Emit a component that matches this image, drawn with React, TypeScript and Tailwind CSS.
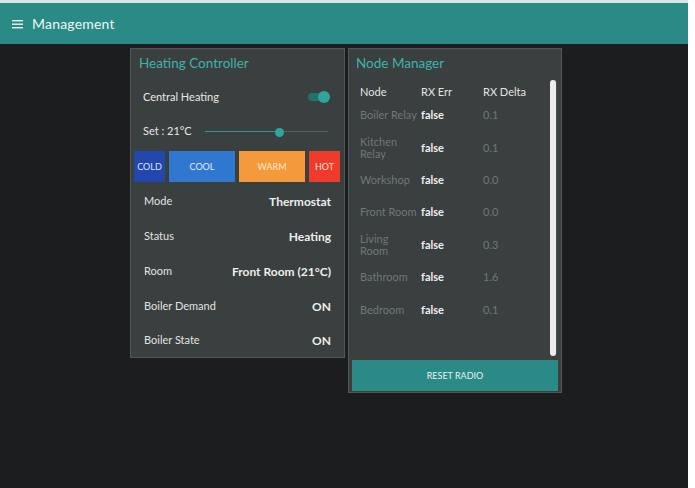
import React from "react";

const nodes = [
  { name: ["Boiler Relay"], err: "false", delta: "0.1" },
  { name: ["Kitchen", "Relay"], err: "false", delta: "0.1" },
  { name: ["Workshop"], err: "false", delta: "0.0" },
  { name: ["Front Room"], err: "false", delta: "0.0" },
  { name: ["Living", "Room"], err: "false", delta: "0.3" },
  { name: ["Bathroom"], err: "false", delta: "1.6" },
  { name: ["Bedroom"], err: "false", delta: "0.1" },
];

const info = [
  { label: "Mode", value: "Thermostat" },
  { label: "Status", value: "Heating" },
  { label: "Room", value: "Front Room (21°C)" },
  { label: "Boiler Demand", value: "ON" },
  { label: "Boiler State", value: "ON" },
];

export default function App() {
  return (
    <div
      className="flex w-[695px] h-[488px] bg-white overflow-hidden"
      style={{ fontFamily: "Lato, 'Open Sans', sans-serif" }}
    >
      <div className="flex flex-col w-[688px] h-full bg-[#1b1d1f]">
        <div className="h-[3px] bg-[#d9e6e5]" />
        <header className="flex items-center h-[41px] bg-[#2a8a86] pl-[12px] text-white">
          <svg width="12" height="10" viewBox="0 0 12 10" className="mr-[8px]">
            <rect x="0" y="1" width="11" height="1.4" fill="#eef7f6" />
            <rect x="0" y="4.5" width="11" height="1.4" fill="#eef7f6" />
            <rect x="0" y="8" width="11" height="1.4" fill="#eef7f6" />
          </svg>
          <span className="text-[14px] tracking-[0.2px] text-[#eef7f6]">Management</span>
        </header>

        <div className="flex items-start gap-[3px] pl-[130px] pt-[4px]">
          {/* heating controller */}
          <div className="w-[215px] bg-[#3a3f3f] border border-[#50565a] text-[#e6e8e8]">
            <div className="px-[8px] pt-[6px] h-[31px] text-[13.5px] leading-[16px] text-[#3fb3a8]">
              Heating Controller
            </div>
            <div className="flex items-center justify-between h-[34px] pl-[12px] pr-[14px] text-[11px]">
              <span>Central Heating</span>
              <div className="relative w-[22px] h-[12px] flex items-center">
                <div className="w-[20px] h-[8px] rounded-full bg-[#23706c]" />
                <div className="absolute right-0 top-0 w-[12px] h-[12px] rounded-full bg-[#2fa59d]" />
              </div>
            </div>
            <div className="flex items-center h-[35px] pl-[12px] pr-[16px] text-[11px]">
              <span className="w-[62px]">Set : 21°C</span>
              <div className="relative flex-1 h-[8px] flex items-center">
                <div className="w-[74px] h-[1.5px] bg-[#2a9a93]" />
                <div className="flex-1 h-[1.5px] bg-[#4f6665]" />
                <div className="absolute left-[70px] top-0 w-[9px] h-[9px] rounded-full bg-[#2fa59d]" />
              </div>
            </div>
            <div className="flex gap-[4px] px-[3px] mt-[2px] h-[31px] text-[9px]">
              <div className="w-[31px] flex items-center justify-center bg-[#2447ae] text-[#dfe6f5]">COLD</div>
              <div className="w-[66px] flex items-center justify-center bg-[#2f77cf] text-[#e4eef9]">COOL</div>
              <div className="w-[66px] flex items-center justify-center bg-[#f59a3a] text-[#fde8d2]">WARM</div>
              <div className="w-[31px] flex items-center justify-center bg-[#ef3b2b] text-[#fde0dc]">HOT</div>
            </div>
            <div className="pt-[2px]">
              {info.map((r, i) => (
                <div
                  key={r.label}
                  className={
                    "flex items-center justify-between pl-[13px] pr-[13px] text-[11px] " +
                    (i === info.length - 1 ? "h-[33px]" : "h-[35px]")
                  }
                >
                  <span className="text-[#e0e3e3]">{r.label}</span>
                  <span className="font-bold text-[12px] text-[#eceeee]">{r.value}</span>
                </div>
              ))}
            </div>
          </div>

          {/* node manager */}
          <div className="w-[214px] bg-[#3a3f3f] border border-[#50565a] pb-[1px]">
            <div className="px-[7px] pt-[6px] h-[31px] text-[13.5px] leading-[16px] text-[#3fb3a8]">
              Node Manager
            </div>
            <div className="flex h-[276px] pl-[11px] pr-[4px]">
              <div className="flex-1 text-[11px]">
                <div className="flex items-end h-[18px] leading-[12px] text-[#e2e5e5]">
                  <span className="w-[61px]">Node</span>
                  <span className="w-[62px]">RX Err</span>
                  <span>RX Delta</span>
                </div>
                <div className="pt-[1px]">
                  {nodes.map((n) => (
                    <div key={n.name.join(" ")} className="flex items-center h-[32.4px] leading-[12px]">
                      <span className="w-[61px] text-[#6f7777] whitespace-nowrap">
                        {n.name.map((l) => (
                          <span key={l} className="block">{l}</span>
                        ))}
                      </span>
                      <span className="w-[62px] font-bold text-[#eef0f0]">{n.err}</span>
                      <span className="text-[#6f7777]">{n.delta}</span>
                    </div>
                  ))}
                </div>
              </div>
              <div className="w-[7px] h-full bg-[#4a4f50] rounded-[2px] flex">
                <div className="w-[6px] h-full bg-[#ececec] rounded-[3px]" />
              </div>
            </div>
            <button className="flex items-center justify-center w-[206px] h-[31px] mx-[3px] mt-[4px] bg-[#2a8a86] text-[9px] text-[#e4f2f1]">
              RESET RADIO
            </button>
          </div>
        </div>
      </div>
    </div>
  );
}
